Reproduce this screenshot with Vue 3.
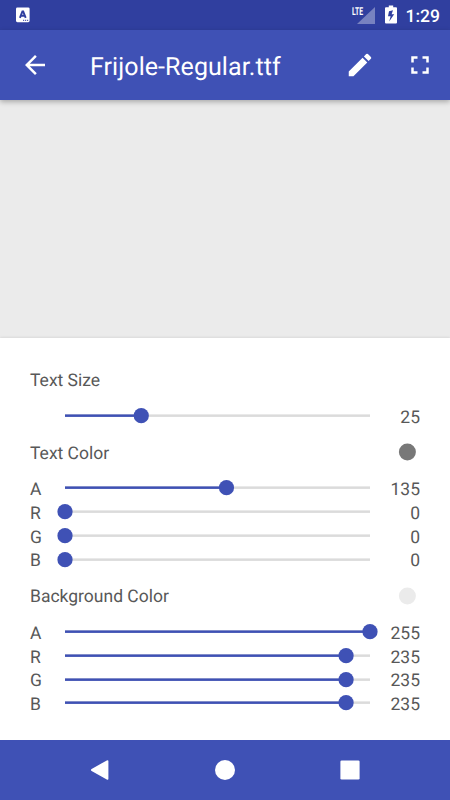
<script setup>
const sections = [
  { title: 'Text Size', rows: [{ label: '', value: 25, max: 100 }] },
  {
    title: 'Text Color',
    swatch: 'ink',
    rows: [
      { label: 'A', value: 135, max: 255 },
      { label: 'R', value: 0, max: 255 },
      { label: 'G', value: 0, max: 255 },
      { label: 'B', value: 0, max: 255 },
    ],
  },
  {
    title: 'Background Color',
    swatch: 'paper',
    rows: [
      { label: 'A', value: 255, max: 255 },
      { label: 'R', value: 235, max: 255 },
      { label: 'G', value: 235, max: 255 },
      { label: 'B', value: 235, max: 255 },
    ],
  },
]
const TRACK = 305
const thumbX = (row) => 8 + (row.value / row.max) * TRACK
</script>

<template>
  <div class="screen">
    <div class="status">
      <svg class="app-badge" width="14" height="16" viewBox="0 0 14 16">
        <rect x="0" y="0.4" width="13.6" height="14.8" rx="1.4" fill="#fff" />
        <path d="M3.9 10.8 6.4 4.4h.8l2.5 6.4M4.9 8.8h3.8" fill="none" stroke="#303f9f" stroke-width="1.9" />
        <path d="M7 13.3h1.2M9 13.3h1.2M11 13.3h1.2" stroke="#303f9f" stroke-width="1" />
      </svg>
      <div class="status-right">
        <div class="signal">
          <span class="lte">LTE</span>
          <svg width="18" height="17" viewBox="0 0 18 17"><path d="M18 0v17H0z" fill="#fff" fill-opacity=".35" /></svg>
        </div>
        <svg class="battery" width="12" height="19" viewBox="0 0 12 19">
          <path d="M3.8 0.4h4.4v1.9H11q1 0 1 1V17.6q0 1-1 1H1q-1 0-1-1V3.3q0-1 1-1h2.8z" fill="#fff" />
          <path d="M8 5.2 4 6.2 3 11.2h2.6l-1.4 5.2 5-7.2H6.6z" fill="#303f9f" />
        </svg>
        <span class="clock">1:29</span>
      </div>
    </div>

    <header class="toolbar">
      <svg class="back" width="30" height="30" viewBox="0 0 24 24"><path d="M20 11H7.83l5.59-5.59L12 4l-8 8 8 8 1.41-1.41L7.83 13H20v-2z" fill="#fff" /></svg>
      <h1>Frijole-Regular.ttf</h1>
      <div class="actions">
        <svg width="30" height="30" viewBox="0 0 24 24"><path d="M3 17.25V21h3.75L17.81 9.94l-3.75-3.75L3 17.25zM20.71 7.04a1 1 0 0 0 0-1.41l-2.34-2.34a1 1 0 0 0-1.41 0l-1.83 1.83 3.75 3.75 1.83-1.83z" fill="#fff" /></svg>
        <svg width="30" height="30" viewBox="0 0 24 24"><path d="M7 14H5v5h5v-2H7v-3zm-2-4h2V7h3V5H5v5zm12 7h-3v2h5v-5h-2v3zM14 5v2h3v3h2V5h-5z" fill="#fff" /></svg>
      </div>
    </header>

    <div class="preview"></div>

    <main class="panel">
      <section v-for="s in sections" :key="s.title">
        <div class="heading">
          <span>{{ s.title }}</span>
          <svg v-if="s.swatch" class="swatch" :class="s.swatch" width="18" height="18" viewBox="0 0 18 18"><circle cx="9.4" cy="9" r="8.5" /></svg>
        </div>
        <div v-for="(r, i) in s.rows" :key="i" class="row">
          <span class="label">{{ r.label }}</span>
          <svg class="slider" width="321" height="23.75" viewBox="0 0 321 23.75">
            <rect class="track" x="8" y="10.4" width="305" height="2.5" />
            <rect class="fill" x="8" y="10.4" :width="thumbX(r) - 8" height="2.5" />
            <circle class="fill" :cx="thumbX(r)" cy="11.65" r="7.6" />
          </svg>
          <span class="value">{{ r.value }}</span>
        </div>
      </section>
    </main>

    <nav class="navbar">
      <svg width="20" height="22" viewBox="0 0 20 22"><path d="M16.8 1.4 1.6 10q-1.4 1 0 2l15.2 8.6q1.6.8 1.6-.8V2.2q0-1.6-1.6-.8z" fill="#fff" /></svg>
      <svg width="20" height="20" viewBox="0 0 20 20"><circle cx="10" cy="10" r="10" fill="#fff" /></svg>
      <svg width="20" height="20" viewBox="0 0 20 20"><rect x="0.4" y="0.4" width="19.2" height="19.2" rx="1.3" fill="#fff" /></svg>
    </nav>
  </div>
</template>

<style>
body {
  margin: 0;
  background: #fff;
}
</style>

<style scoped>
.screen {
  display: flex;
  flex-direction: column;
  width: 450px;
  height: 800px;
  overflow: hidden;
  font-family: Roboto, "Liberation Sans", sans-serif;
  text-rendering: geometricPrecision;
}
svg {
  display: block;
  flex: none;
}
.status {
  display: flex;
  justify-content: space-between;
  align-items: center;
  box-sizing: border-box;
  height: 30px;
  padding: 0 10px 0 16px;
  background: #303f9f;
  color: #fff;
}
.status-right {
  display: flex;
  align-items: center;
}
.signal {
  display: flex;
  align-items: flex-start;
  height: 18px;
}
.signal svg {
  margin: 1px 0 0 -7px;
}
.lte {
  width: 12px;
  font-size: 11px;
  line-height: 11px;
  font-weight: 700;
  transform: scaleX(0.62);
  transform-origin: 0 0;
}
.battery {
  margin-left: 10px;
  margin-top: -1px;
}
.clock {
  margin-left: 9px;
  font-size: 17.5px;
  font-weight: 500;
  line-height: 22px;
  padding-top: 4px;
}
.toolbar {
  position: relative;
  z-index: 1;
  display: flex;
  align-items: center;
  box-sizing: border-box;
  height: 70px;
  padding: 0 15px 0 20px;
  background: #3f51b5;
  color: #fff;
  box-shadow: 0 2px 5px rgba(0, 0, 0, 0.28);
}
h1 {
  margin: 0 0 0 40px;
  padding-top: 5px;
  font-size: 25px;
  font-weight: 400;
  line-height: 30px;
  letter-spacing: 0.07px;
}
.actions {
  display: flex;
  gap: 30px;
  margin-left: auto;
}
.preview {
  height: 238px;
  background: #ebebeb;
}
.panel {
  position: relative;
  box-sizing: border-box;
  height: 402px;
  padding: 30px 30px 0;
  background: #fff;
  color: #585858;
  font-size: 17.5px;
  line-height: 23.75px;
  box-shadow: 0 0 3px rgba(0, 0, 0, 0.14);
}
section + section {
  margin-top: 13px;
}
.heading {
  display: flex;
  align-items: center;
  justify-content: space-between;
  height: 24px;
  margin-bottom: 11.75px;
}
.heading span {
  padding-top: 4px;
}
.swatch {
  margin-right: 4px;
  margin-top: -1px;
}
.ink {
  fill: #787878;
}
.paper {
  fill: #ebebeb;
}
.row {
  display: flex;
  height: 23.75px;
}
.label {
  width: 27px;
  padding-top: 2.8px;
}
.slider {
  overflow: visible;
}
.track {
  fill: #dbdbdb;
}
.fill {
  fill: #3f51b5;
}
.value {
  flex: 1;
  padding-top: 2.8px;
  text-align: right;
}
.navbar {
  position: relative;
  display: flex;
  align-items: center;
  justify-content: space-between;
  box-sizing: border-box;
  height: 60px;
  padding: 0 90px;
  background: #3f51b5;
}
</style>
